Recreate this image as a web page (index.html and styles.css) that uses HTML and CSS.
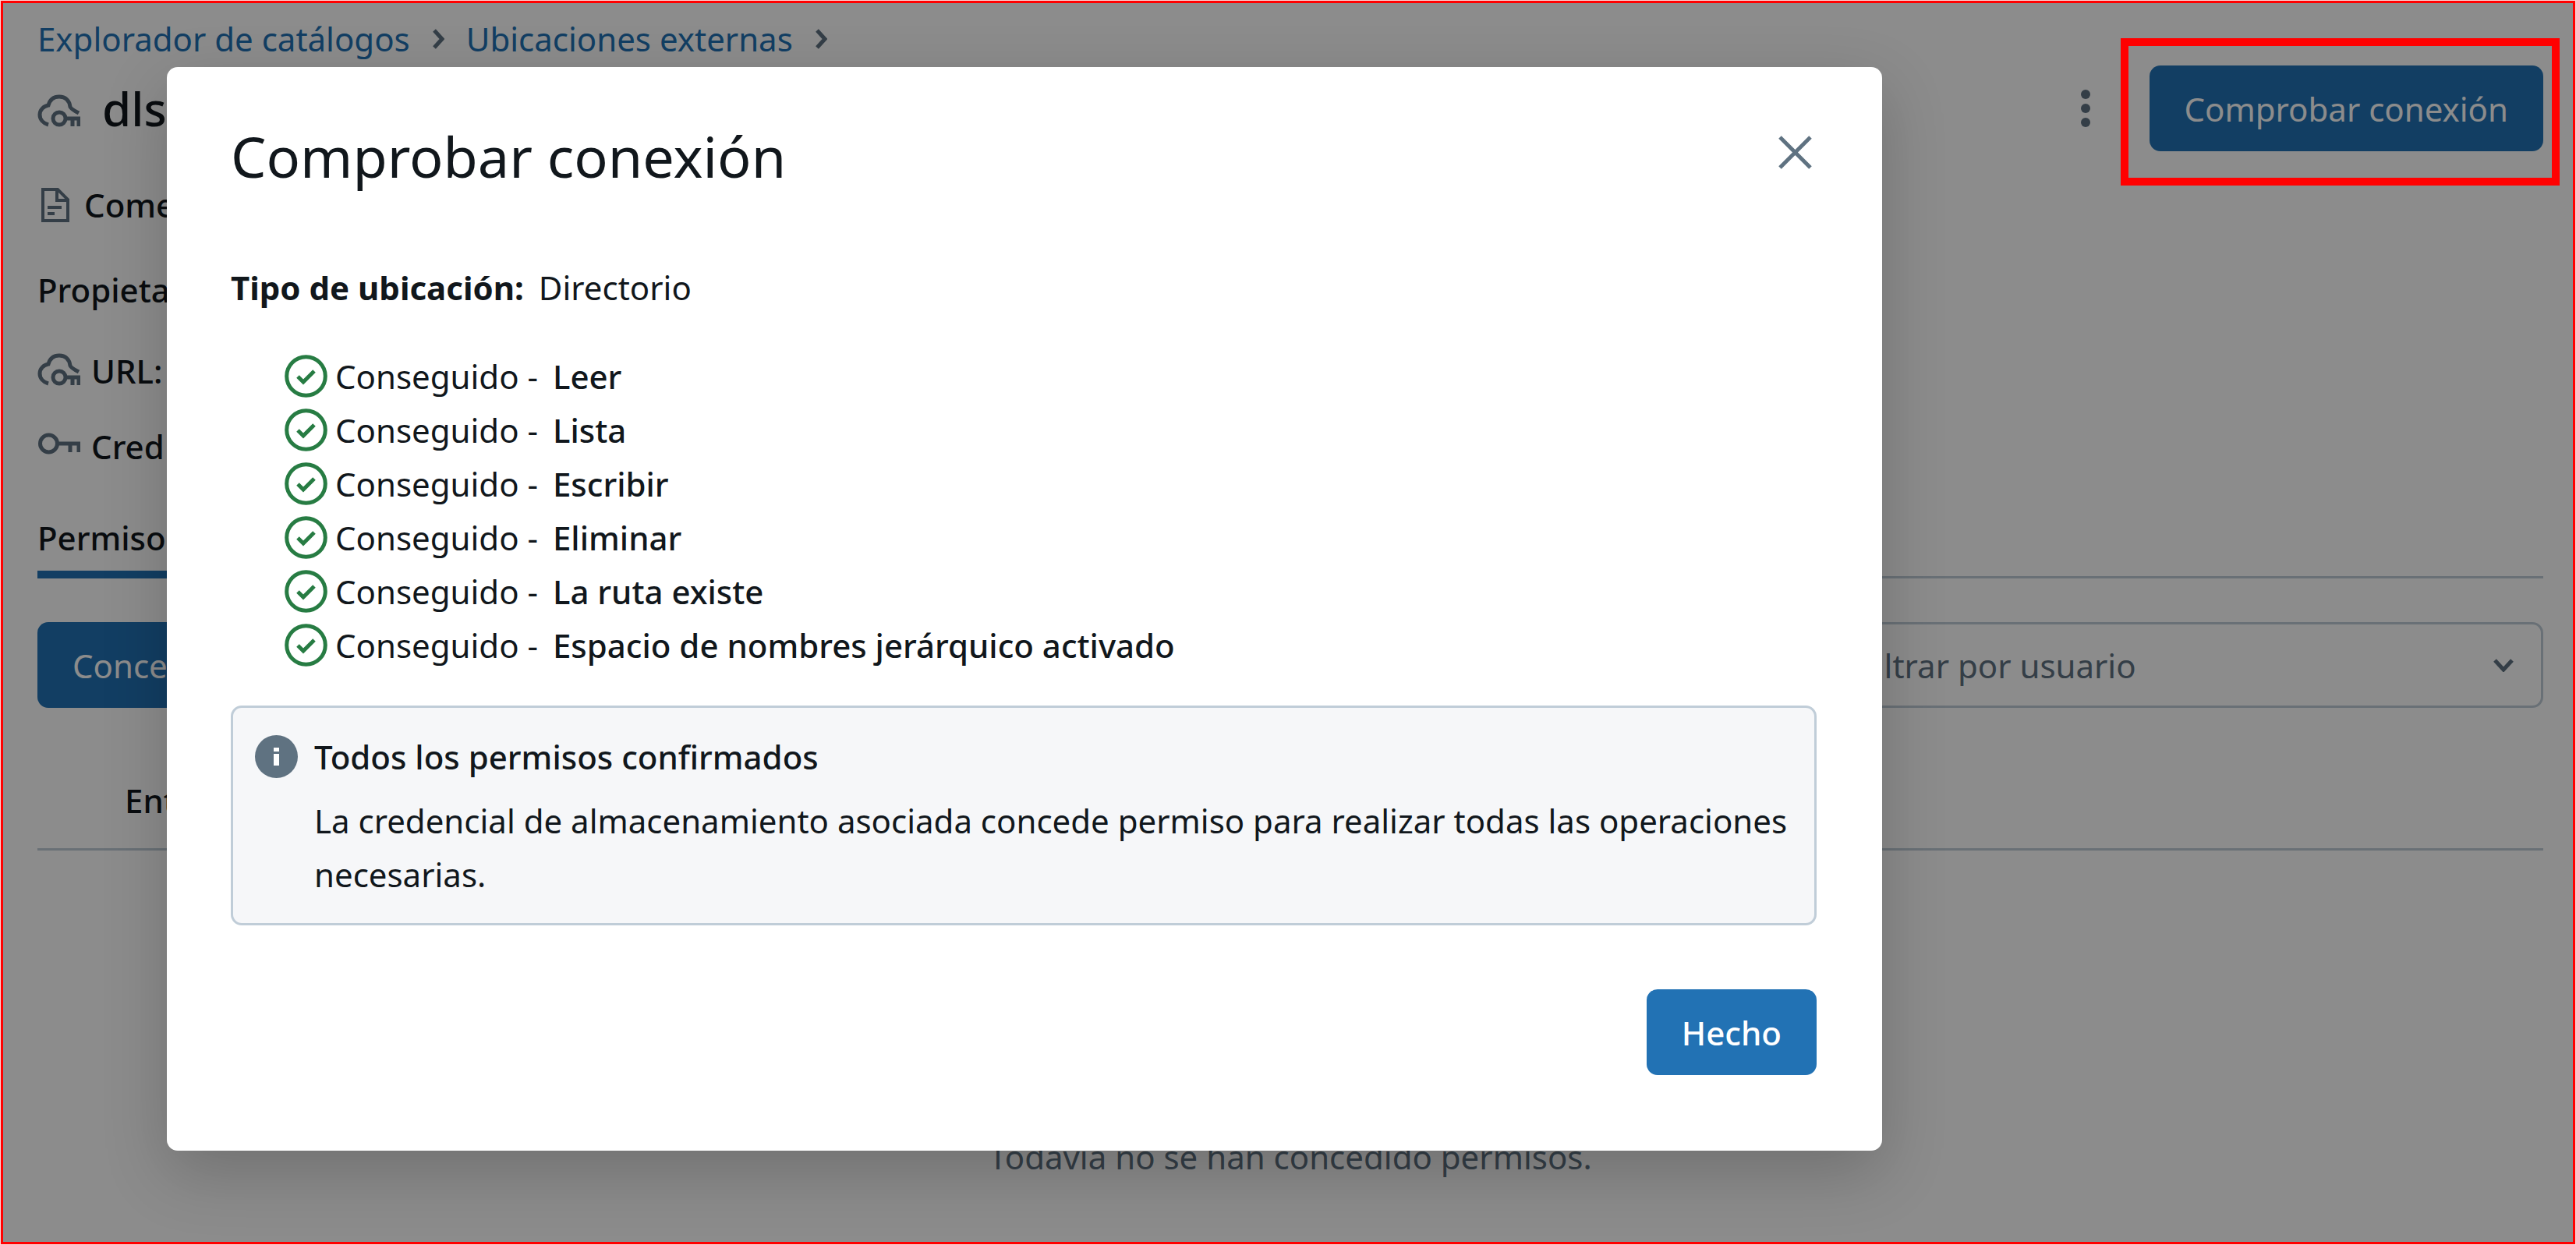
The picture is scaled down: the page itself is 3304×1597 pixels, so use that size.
FILE: index.html
```html
<!DOCTYPE html>
<html lang="es">
<head>
<meta charset="utf-8">
<meta name="viewport" content="width=device-width, initial-scale=1">
<title>Comprobar conexión</title>
<link rel="stylesheet" href="styles.css">
</head>
<body>
<svg class="sprite" aria-hidden="true">
  <symbol id="cloud-key" viewBox="0 0 55 55">
    <path d="M14 44C7 42 3 37 3 31C3 25 8 20 14 19C16 12 21 8 28 8C36 8 41 13 42 21C44 25 48 26 53 29"/>
    <circle cx="28" cy="36" r="8"/>
    <path d="M36 36H53V46M45 36V46"/>
  </symbol>
  <symbol id="check-circle" viewBox="0 0 55 55">
    <circle cx="27.5" cy="27.5" r="24.8"/>
    <path d="M17 28L24 35L38 21"/>
  </symbol>
  <symbol id="crumb-arrow" viewBox="0 0 16 26">
    <path d="M3 2L13 13L3 24"/>
  </symbol>
</svg>

<div class="page">
  <main class="content">
    <nav class="breadcrumb" aria-label="Ruta">
      <a href="#catalogos">Explorador de catálogos</a>
      <svg class="crumb-arrow"><use href="#crumb-arrow"/></svg>
      <a href="#ubicaciones">Ubicaciones externas</a>
      <svg class="crumb-arrow"><use href="#crumb-arrow"/></svg>
    </nav>

    <header class="title-row">
      <svg class="icon icon-title"><use href="#cloud-key"/></svg>
      <h1>dls</h1>
      <button class="menu-button" type="button" aria-label="Más acciones">
        <svg viewBox="0 0 16 50"><circle cx="8" cy="7" r="6"/><circle cx="8" cy="25" r="6"/><circle cx="8" cy="43" r="6"/></svg>
      </button>
      <div class="callout">
        <button class="button" type="button">Comprobar conexión</button>
        <span class="callout-frame"></span>
      </div>
    </header>

    <div class="detail detail-comment">
      <svg class="icon icon-doc" viewBox="0 0 46 55"><path d="M7 8H26L39 21V48H7ZM25 8V22H39M13 31H31M13 39H22"/></svg>
      <span>Comen</span>
    </div>
    <div class="detail detail-owner"><span>Propietario</span></div>
    <div class="detail detail-url">
      <svg class="icon"><use href="#cloud-key"/></svg>
      <span>URL:</span>
    </div>
    <div class="detail detail-credential">
      <svg class="icon" viewBox="0 0 55 55"><circle cx="14.5" cy="24" r="11"/><path d="M26 24H53V35M42 24V35"/></svg>
      <span>Cred</span>
    </div>

    <div class="tabs" role="tablist">
      <button class="tab" type="button" role="tab" aria-selected="true">Permisos</button>
    </div>

    <div class="toolbar">
      <button class="button" type="button">Conceder</button>
      <div class="filter">
        <select aria-label="Filtrar por usuario"><option>Filtrar por usuario</option></select>
        <svg class="chevron" viewBox="0 0 26 18"><path d="M2 3L13 15L24 3"/></svg>
      </div>
    </div>

    <table class="grants">
      <thead><tr><th scope="col">Entidad</th></tr></thead>
      <tbody><tr><td>Todavía no se han concedido permisos.</td></tr></tbody>
    </table>
  </main>

  <div class="overlay">
    <section class="modal" role="dialog" aria-modal="true" aria-labelledby="modal-title">
      <header class="modal-header">
        <h2 id="modal-title">Comprobar conexión</h2>
        <button class="close" type="button" aria-label="Cerrar">
          <svg class="icon" viewBox="0 0 55 55"><path d="M8 8L47 47M47 8L8 47"/></svg>
        </button>
      </header>
      <p class="location"><strong>Tipo de ubicación:</strong> Directorio</p>
      <ul class="checks">
        <li><svg class="icon"><use href="#check-circle"/></svg><span>Conseguido - <b>Leer</b></span></li>
        <li><svg class="icon"><use href="#check-circle"/></svg><span>Conseguido - <b>Lista</b></span></li>
        <li><svg class="icon"><use href="#check-circle"/></svg><span>Conseguido - <b>Escribir</b></span></li>
        <li><svg class="icon"><use href="#check-circle"/></svg><span>Conseguido - <b>Eliminar</b></span></li>
        <li><svg class="icon"><use href="#check-circle"/></svg><span>Conseguido - <b>La ruta existe</b></span></li>
        <li><svg class="icon"><use href="#check-circle"/></svg><span>Conseguido - <b>Espacio de nombres jerárquico activado</b></span></li>
      </ul>
      <div class="alert" role="status">
        <svg class="alert-icon" viewBox="0 0 55 55"><circle cx="27.5" cy="27.5" r="27.5"/><path d="M24 16H31V21H24ZM24 24H31V39H24Z"/></svg>
        <div class="alert-text">
          <h3>Todos los permisos confirmados</h3>
          <p>La credencial de almacenamiento asociada concede permiso para realizar todas las operaciones necesarias.</p>
        </div>
      </div>
      <footer class="modal-footer">
        <button class="button button-strong" type="button">Hecho</button>
      </footer>
    </section>
  </div>
</div>
</body>
</html>
```
FILE: styles.css
```css
:root {
  --text: #11171c;
  --muted: #5f7281;
  --line: #c0cdd8;
  --blue: #2272b4;
  --green: #277c43;
  --red: #ff0000;
}

* {
  box-sizing: border-box;
  margin: 0;
  padding: 0;
}

body {
  padding: 1px;
  background: #fcd8d8;
  color: var(--text);
  font: 400 42px/69px "Noto Sans", "Open Sans", sans-serif;
}

button,
select {
  font: inherit;
  color: inherit;
  background: none;
  border: 0;
}

a {
  color: var(--blue);
  text-decoration: none;
}

.sprite {
  position: absolute;
  width: 0;
  height: 0;
}

.icon {
  flex: none;
  width: 55px;
  height: 55px;
  fill: none;
  stroke: var(--muted);
  stroke-width: 5px;
}

.page {
  position: relative;
  min-height: calc(100vh - 2px);
  border: 3px solid var(--red);
  background: #fff;
}

.content {
  display: flex;
  flex-direction: column;
  padding: 11px 38px 0 44px;
}

.breadcrumb {
  display: flex;
  align-items: center;
  gap: 28px;
}

.crumb-arrow {
  width: 16px;
  height: 26px;
  fill: none;
  stroke: var(--muted);
  stroke-width: 5px;
}

.title-row {
  display: flex;
  align-items: center;
}

.title-row h1 {
  flex: 1;
  margin-left: 28px;
  font-size: 60px;
  font-weight: 500;
  line-height: 84px;
}

.icon-title {
  margin-top: 8px;
}

.menu-button {
  display: flex;
  padding: 0 8px;
  margin-right: 66px;
}

.menu-button svg {
  width: 16px;
  height: 50px;
  fill: var(--muted);
}

.button {
  height: 110px;
  padding: 0 45px;
  border-radius: 14px;
  background: var(--blue);
  color: #fff;
}

.button-strong {
  font-weight: 500;
}

.callout {
  position: relative;
  display: flex;
}

/* Sits above the dimmed overlay to point at the button */
.callout-frame {
  position: absolute;
  z-index: 2;
  inset: -35px -21px -44px -37px;
  border: 10px solid var(--red);
}

.detail {
  display: flex;
  align-items: center;
  gap: 14px;
  font-weight: 500;
}

.detail-comment {
  margin-top: 34px;
}

.detail-owner {
  margin-top: 40px;
}

.detail-url {
  margin-top: 35px;
}

.detail-credential {
  margin-top: 28px;
}

.icon-doc {
  width: 46px;
  stroke-width: 4px;
}

.tabs {
  display: flex;
  margin-top: 48px;
  border-bottom: 3px solid var(--line);
}

.tab {
  padding-bottom: 8px;
  margin-bottom: -3px;
  border-bottom: 10px solid var(--blue);
  font-weight: 500;
}

.toolbar {
  display: flex;
  justify-content: space-between;
  margin-top: 56px;
}

.filter {
  position: relative;
  display: flex;
  width: 29%;
}

.filter select {
  flex: 1;
  height: 110px;
  padding: 0 51px;
  border: 3px solid var(--line);
  border-radius: 14px;
  color: var(--muted);
  appearance: none;
}

.chevron {
  position: absolute;
  right: 38px;
  top: 46px;
  width: 26px;
  height: 18px;
  fill: none;
  stroke: var(--muted);
  stroke-width: 5px;
  pointer-events: none;
}

.grants {
  width: 100%;
  border-collapse: collapse;
}

.grants th {
  padding: 84px 112px 27px;
  border-bottom: 3px solid var(--line);
  font-weight: 500;
  text-align: left;
}

.grants td {
  padding-top: 358px;
  color: var(--muted);
  text-align: center;
}

.overlay {
  position: absolute;
  inset: 0;
  padding: 82px 210px 0;
  overflow: hidden;
  background: rgba(0, 0, 0, 0.45);
}

.modal {
  display: flex;
  flex-direction: column;
  max-width: 2200px;
  padding: 66px 84px 97px 82px;
  border-radius: 14px;
  background: #fff;
  box-shadow: 0 28px 84px rgba(0, 0, 0, 0.2);
}

.modal-header {
  display: flex;
  align-items: flex-start;
  justify-content: space-between;
}

.modal-header h2 {
  font-size: 72px;
  font-weight: 400;
  line-height: 96px;
}

.close {
  display: flex;
  margin-top: 16px;
}

.location {
  margin-top: 86px;
}

.location strong {
  margin-right: 8px;
  font-weight: 700;
}

.checks {
  margin-top: 45px;
  padding-left: 69px;
  list-style: none;
}

.checks li {
  display: flex;
  align-items: center;
  gap: 10px;
}

.checks .icon {
  stroke: var(--green);
}

.checks b {
  margin-left: 8px;
  font-weight: 500;
}

.alert {
  display: flex;
  gap: 21px;
  margin-top: 43px;
  padding: 28px;
  border: 3px solid var(--line);
  border-radius: 14px;
  background: #f6f7f9;
}

.alert-icon {
  flex: none;
  width: 55px;
  height: 55px;
  margin-top: 7px;
  fill: var(--muted);
}

.alert-icon path {
  fill: #fff;
}

.alert h3 {
  margin-bottom: 13px;
  font-size: inherit;
  font-weight: 500;
}

.modal-footer {
  display: flex;
  justify-content: flex-end;
  margin-top: 82px;
}
```
